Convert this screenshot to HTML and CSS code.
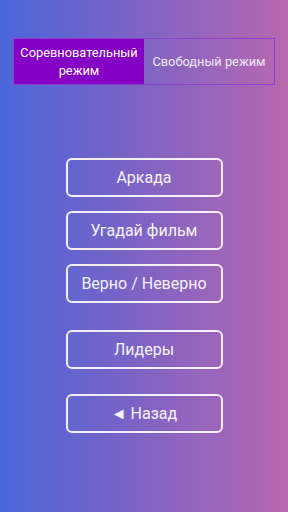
FILE: index.html
```html
<!DOCTYPE html>
<html lang="ru">
<head>
    <meta charset="UTF-8">
    <meta name="viewport" content="width=device-width, initial-scale=1.0">
    <title>Меню</title>
    <link rel="stylesheet" href="styles.css">
</head>
<body>
    <div class="tabs">
        <div class="tab active">Соревновательный режим</div>
        <div class="tab">Свободный режим</div>
    </div>

    <div class="menu">
        <button class="menu-btn">Аркада</button>
        <button class="menu-btn">Угадай фильм</button>
        <button class="menu-btn">Верно / Неверно</button>
        <button class="menu-btn leaders">Лидеры</button>
        <button class="menu-btn back">&#9668; Назад</button>
    </div>
</body>
</html>
```

FILE: styles.css
```css
html, body {
    height: 100%;
}

body {
    margin: 0;
    font-family: Roboto, "Noto Sans", Arial, sans-serif;
    background: linear-gradient(90deg, #4a67da 0%, #7a63c6 45%, #b768ae 100%);
    color: white;
    overflow: hidden;
}

.tabs {
    display: flex;
    margin: 38px 13px 0 13px;
    height: 47px;
    border: 1px solid #8d3fd0;
    box-sizing: border-box;
}

.tab {
    flex: 1;
    display: flex;
    align-items: center;
    justify-content: center;
    text-align: center;
    font-size: 12.8px;
    line-height: 18px;
    padding: 0 5px;
    color: #f1e8fb;
}

.tab.active {
    background-color: #8500c4;
    color: white;
}

.menu {
    display: flex;
    flex-direction: column;
    align-items: center;
    gap: 14px;
    margin-top: 73px;
}

.menu-btn {
    width: 157px;
    height: 39px;
    background: transparent;
    border: 2px solid #f4f0fb;
    border-radius: 6px;
    color: #f6f2fc;
    font-family: Roboto, "Noto Sans", Arial, sans-serif;
    font-size: 16px;
    cursor: pointer;
}

.leaders {
    margin-top: 13px;
}

.back {
    margin-top: 11px;
}
```
